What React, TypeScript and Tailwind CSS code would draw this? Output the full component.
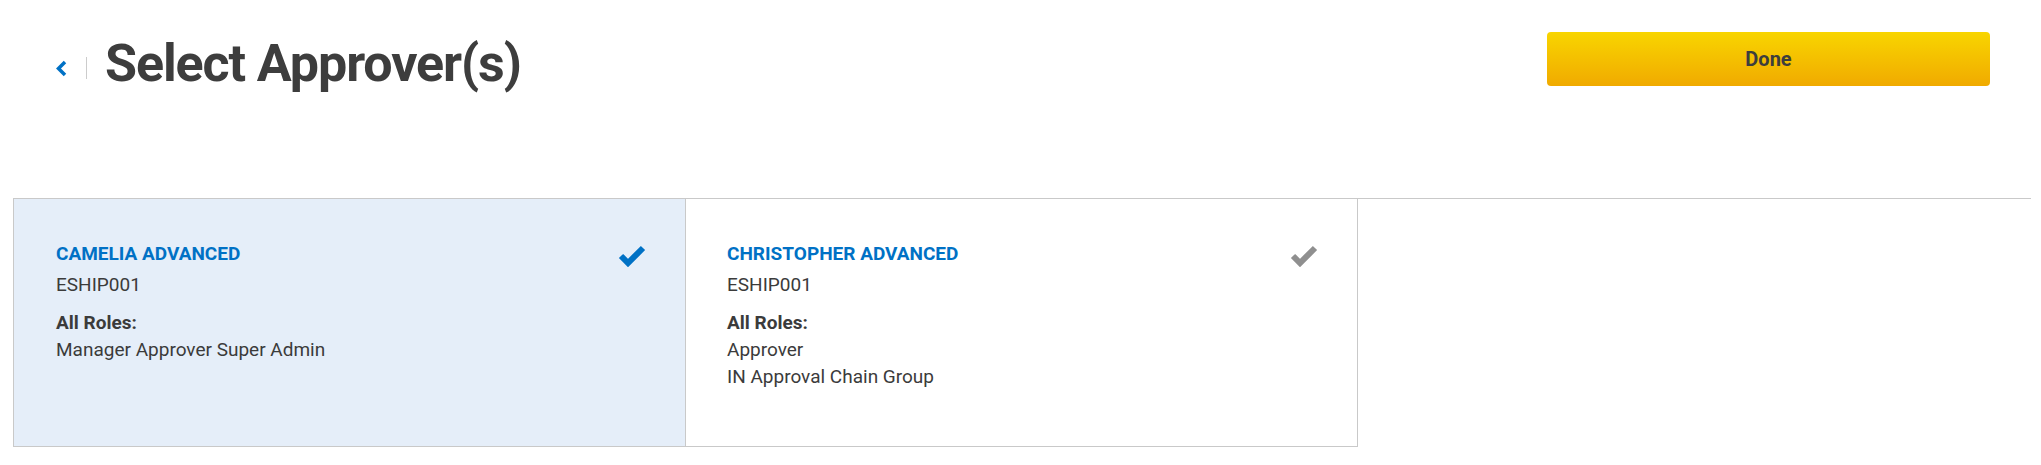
import React from "react";

type Approver = {
  name: string;
  code: string;
  roles: string[];
  selected: boolean;
};

const approvers: Approver[] = [
  { name: "CAMELIA ADVANCED", code: "ESHIP001", roles: ["Manager Approver Super Admin"], selected: true },
  { name: "CHRISTOPHER ADVANCED", code: "ESHIP001", roles: ["Approver", "IN Approval Chain Group"], selected: false },
];

function CheckIcon({ color }: { color: string }) {
  return (
    <svg width="28" height="23" viewBox="0 0 28 23" fill="none">
      <polyline
        points="3,12 10,19 25,4"
        stroke={color}
        strokeWidth="6"
        strokeLinejoin="miter"
        strokeLinecap="butt"
      />
    </svg>
  );
}

function ApproverCard({ a, first }: { a: Approver; first: boolean }) {
  return (
    <div
      className={
        first
          ? "flex h-[248px] w-[673px] justify-between border-b border-l border-r border-[#c9c9c9] bg-[#e5eef9] pl-[42px] pr-[39px] pt-[41px]"
          : "flex h-[248px] w-[672px] justify-between border-b border-r border-[#c9c9c9] bg-white pl-[41px] pr-[39px] pt-[41px]"
      }
    >
      <div className="text-[19px] leading-[27px] text-[#3b3b3b]">
        <div className="mb-[4px] font-bold text-[#0071c5]">{a.name}</div>
        <div className="mb-[11px]">{a.code}</div>
        <div className="font-bold">All Roles:</div>
        {a.roles.map((r) => (
          <div key={r}>{r}</div>
        ))}
      </div>
      <div className="mt-[4px]">
        <CheckIcon color={a.selected ? "#0071c5" : "#8f8f8f"} />
      </div>
    </div>
  );
}

export default function App() {
  return (
    <div className="min-h-[465px] w-full bg-white font-['Roboto',sans-serif]">
      <div className="flex justify-between pt-[32px]">
        <div className="ml-[55px] flex items-start">
          <button className="mt-[28px]">
            <svg width="13" height="17" viewBox="0 0 13 17" fill="none">
              <polyline points="10,2 3.5,8.5 10,15" stroke="#0071c5" strokeWidth="3.5" />
            </svg>
          </button>
          <div className="ml-[18px] mt-[25px] h-[22px] w-px bg-[#cccccc]" />
          <h1 className="ml-[18px] mt-[5px] text-[52px] font-bold leading-[54px] tracking-[-1.1px] text-[#3d3d3d]">
            Select Approver(s)
          </h1>
        </div>
        <button className="mr-[51px] h-[54px] w-[443px] rounded-[4px] bg-gradient-to-b from-[#f8d500] to-[#f0aa00] text-[20px] font-bold text-[#3d3d3d]">
          Done
        </button>
      </div>

      <div className="ml-[13px] mr-[10px] mt-[107px] flex border-t border-[#c9c9c9]">
        {approvers.map((a, i) => (
          <ApproverCard key={a.name} a={a} first={i === 0} />
        ))}
      </div>
    </div>
  );
}
